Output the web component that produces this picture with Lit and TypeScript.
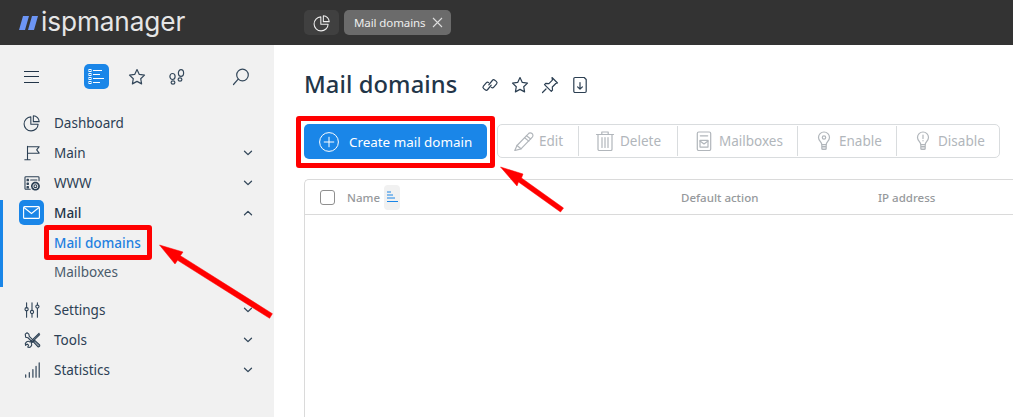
import { LitElement, html, css, svg } from "lit";
import { customElement } from "lit/decorators.js";

const ic = (body: unknown, size = 20, vb = 20) => html`<svg class="ic" width=${size} height=${size} viewBox="0 0 ${vb} ${vb}" fill="none" stroke="currentColor" stroke-width="1.2" stroke-linecap="round" stroke-linejoin="round">${body}</svg>`;

const pie = svg`<path d="M8.7 3.2a7.8 7.8 0 1 0 8.1 8.1H8.7z"/><path d="M11.5 2v6.5H18A6.5 6.5 0 0 0 11.5 2z"/>`;
const star = svg`<path d="M10 2.6l2.3 4.8 5.2.7-3.8 3.6.9 5.2L10 14.4l-4.6 2.5.9-5.2L2.5 8.1l5.2-.7z"/>`;
const chevD = html`<svg class="chev" width="10" height="6" viewBox="0 0 10 6" fill="none" stroke="currentColor" stroke-width="1.3" stroke-linecap="round" stroke-linejoin="round"><path d="M1.5 1.200L5 4.600l3.500-3.400"/></svg>`;
const chevU = html`<svg class="chev" width="10" height="6" viewBox="0 0 10 6" fill="none" stroke="currentColor" stroke-width="1.3" stroke-linecap="round" stroke-linejoin="round"><path d="M1.5 4.800L5 1.400l3.500 3.400"/></svg>`;

const icons = {
  dashboard: pie,
  main: svg`<path d="M5 2.500v15M2 17.500h6M5 3h13l-2.800 3.500 2.800 3.700H5"/>`,
  www: svg`<path d="M8 17H3.200a1 1 0 0 1-1-1V4a1 1 0 0 1 1-1h13.600a1 1 0 0 1 1 1v3.500"/><path d="M4.500 6h1.500v1.500H4.500zM4.500 10h1.500v1.500H4.500zM4.500 14h1.500v1.500H4.500zM8.500 6.700h7"/><circle cx="13.800" cy="13.500" r="1.600"/><circle cx="13.800" cy="13.500" r="4" stroke-dasharray="1.900 1" stroke-width="1.900"/>`,
  settings: svg`<path d="M4 2v5.500M4 11v7M10 2v8.500M10 14v4M16 2v2.500M16 8v10"/><circle cx="4" cy="9.200" r="1.800"/><circle cx="10" cy="12.200" r="1.800"/><circle cx="16" cy="6.200" r="1.800"/>`,
  tools: svg`<path d="M2.500 3.500L4.500 2l2 1.500.5 2.500 5 5-1.500 1.500-5-5-2.500-.5z"/><path d="M11.500 12l5 5.500a1.500 1.500 0 0 0 2-2L13 10.500z" fill="currentColor" fill-opacity=".5"/><path d="M18 2.500L7.800 12.300a3.200 3.200 0 0 0-5 3.700l2-1.500 1.400 1.200-1 2.200a3.200 3.200 0 0 0 4-4.600L18.500 4"/>`,
  stats: svg`<path d="M3 18v-2.500M7 18v-5M11 18v-8.500M14.500 18V6M18 18V2" stroke-width="1.300"/>`,
};

const tb = {
  edit: svg`<path d="M3 14.500L14.300 2.800a2.600 2.600 0 0 1 4 3.400L7 17.800.8 19.500z"/><path d="M3 14.500l4 3.300M12.500 4.700l4.200 3.300M10.600 6.800l4.200 3.300"/>`,
  del: svg`<path d="M1.500 3.500h17M6.800 3.300V1h6.400v2.300M3 3.800v14.400A1.300 1.300 0 0 0 4.300 19.500h11.400a1.300 1.300 0 0 0 1.300-1.300V3.800M7 6.500v10M10 6.500v10M13 6.500v10"/>`,
  box: svg`<rect x="3.300" y="1" width="13.400" height="18.500" rx="1.500"/><path d="M6.300 4.800h7.400"/><rect x="6" y="9.300" width="8" height="6.800"/><path d="M6 10l4 3 4-3"/>`,
  bulb: svg`<path d="M7.800 13.500c0-2.300-3.300-3.600-3.300-7a5.500 5.500 0 0 1 11 0c0 3.400-3.300 4.700-3.300 7z"/><path d="M7.800 13.500v4a1 1 0 0 0 1 1h2.400a1 1 0 0 0 1-1v-4M7.800 15.300h4.400M7.800 17h4.400"/><circle cx="10" cy="6.500" r="1.700"/>`,
  bulbOff: svg`<path d="M7.800 13.500c0-2.300-3.300-3.600-3.300-7a5.500 5.500 0 0 1 11 0c0 3.400-3.300 4.700-3.300 7z"/><path d="M7.800 13.500v4a1 1 0 0 0 1 1h2.400a1 1 0 0 0 1-1v-4M7.800 15.300h4.400M7.800 17h4.400M10 4v3.500M10 9.500v.3"/>`,
};

@customElement("app-root")
export class AppRoot extends LitElement {
  static styles = css`
    :host { display: block; width: 1013px; height: 417px; overflow: hidden; position: relative;
      font-family: "Noto Sans", "Liberation Sans", sans-serif; font-size: 14px; color: #223548; background: #fff; }
    * { box-sizing: border-box; }
    .ic { display: block; flex: none; }

    .top { height: 45px; background: #333; display: flex; align-items: center; }
    .brand { width: 304px; padding-left: 19px; display: flex; align-items: center; gap: 3px; }
    .logo-text { font-family: "Inter", "Roboto", sans-serif; font-size: 26.200px; font-weight: 400; color: #e6e6e6; letter-spacing: -0.1px; line-height: 45px; margin-top: -3px; }
    .tab { height: 25px; border-radius: 5px; display: flex; align-items: center; color: #eee; }
    .tab.home { width: 35px; background: #404040; justify-content: center; margin-right: 5px; }
    .tab.cur { width: 107px; background: #6b6b6b; padding-left: 10px; gap: 7px; font-size: 11.500px; letter-spacing: -0.1px; }

    .body { display: flex; height: 372px; }
    .side { width: 274px; background: #f1f1f1; flex: none; padding-top: 19px; }
    .quick { display: flex; align-items: center; height: 25px; padding-left: 24px; color: #34485b; margin-bottom: 19px; }
    .burger { width: 15px; height: 12px; border-top: 1px solid #223548; border-bottom: 1px solid #223548; position: relative; margin-right: 45px; }
    .burger::after { content: ""; position: absolute; left: 0; right: 0; top: 4.500px; border-top: 1px solid #223548; }
    .qbtn { width: 25px; height: 25px; border-radius: 5px; display: flex; align-items: center; justify-content: center; margin-right: 15px; }
    .qbtn.on { background: #1a86e8; color: #fff; }
    .qsearch { margin-left: 27px; }

    .item { height: 30px; display: flex; align-items: center; padding-left: 24px; padding-right: 21px; color: #2c4054; font-size: 13.500px; }
    .item .ic { margin-right: 13px; margin-left: -1px; }
    .item .lbl { flex: 1; }
    .chev { color: #34485b; display: block; }
    .group { border-left: 3px solid #1a86e8; height: 87px; margin-top: 2px; margin-bottom: 8px; }
    .group .item { padding-left: 21px; color: #223548; font-weight: 500; }
    .mailic { width: 25px; height: 25px; background: #1a86e8; color: #fff; border-radius: 5px; display: flex; align-items: center; justify-content: center; margin: 0 10px 0 -5px; }
    .sub { height: 28px; padding-left: 51px; display: flex; align-items: center; color: #4a5b6b; font-size: 13.500px; }
    .sub.cur { color: #1f80e0; font-weight: 500; height: 30px; }
    .group .first { height: 25px; margin-bottom: 3px; }

    .main { flex: 1; padding: 0 0 0 30px; min-width: 0; }
    .title { height: 79px; display: flex; align-items: center; color: #223548; }
    .title h1 { margin: 0 23px 0 0; font-size: 23.700px; font-weight: 500; line-height: 1; letter-spacing: .1px; }
    .title .ic { margin-right: 10px; color: #2c3f52; }
    .bar { display: flex; height: 35px; }
    .create { width: 183px; height: 35px; background: #1a86e8; color: #fff; border-radius: 5px; display: flex; align-items: center; padding-left: 15px; gap: 10px; font-size: 13.400px; font-weight: 400; }
    .tools { margin-left: 10px; width: 503px; height: 34px; border: 1px solid #d9dcde; border-radius: 5px; display: flex; align-items: center; color: #b1b6bb; font-size: 13.500px; }
    .tool { display: flex; align-items: center; height: 30px; gap: 5px; padding-left: 16px; flex: none; }
    .tool + .tool { border-left: 1px solid #d9dcde; }
    .tool.w80 { width: 80px; }
    .tool.w99 { width: 99px; }
    .tool.w120 { width: 120px; }
    .table { margin-top: 20px; height: 260px; border: 1px solid #dadada; border-right: 0; border-bottom: 0; border-top-left-radius: 5px; }
    .thead { height: 35px; border-bottom: 1px solid #dadada; display: flex; align-items: center; color: #96999c; font-size: 11.500px; font-weight: 500; position: relative; }
    .check { width: 15px; height: 15px; border: 1px solid #8f8f8f; border-radius: 3px; margin-left: 15px; margin-right: 12px; }
    .sort { width: 16px; height: 25px; background: #f1f1f1; border-radius: 4px; margin-left: 4px; display: flex; align-items: center; justify-content: center; color: #1a86e8; }
    .col-a { margin-left: 281px; width: 197px; }

    .anno { position: absolute; left: 0; top: 0; pointer-events: none; }
    .arrow { fill: #f00; stroke: #f00; stroke-width: .5; stroke-linejoin: round; }
    .redbox { position: absolute; border: 5px solid #f00; border-radius: 3px; pointer-events: none; }
    .rb1 { left: 44px; top: 225px; width: 108px; height: 35px; }
    .rb2 { left: 296px; top: 116px; width: 199px; height: 52px; }
  `;

  private row(icon: unknown, label: string) {
    return html`<div class="item">${ic(icon, 18)}<span class="lbl">${label}</span>${chevD}</div>`;
  }

  render() {
    return html`
      <div class="top">
        <div class="brand">
          <svg width="19" height="14" viewBox="0 0 19 14"><path fill="#6c95f5" d="M4 0h6L6 14H0zM13 0h6L15 14H9z"/></svg>
          <span class="logo-text">ispmanager</span>
        </div>
        <div class="tab home">${ic(pie, 18)}</div>
        <div class="tab cur"><span>Mail domains</span>
          <svg width="11" height="11" viewBox="0 0 11 11" stroke="#ddd" stroke-width="1.100"><path d="M1 1l9 9M10 1l-9 9"/></svg>
        </div>
      </div>
      <div class="body">
        <aside class="side">
          <div class="quick">
            <div class="burger"></div>
            <div class="qbtn on">
              <svg width="17" height="17" viewBox="0 0 17 17" fill="none" stroke="#fff" stroke-width="1"><rect x="1" y="1.500" width="2" height="2"/><rect x="1" y="5.500" width="2" height="2"/><rect x="1" y="9.500" width="2" height="2"/><rect x="1" y="13.500" width="2" height="2"/><path d="M5 2.500h9M5 6.500h7M5 10.500h11M5 14.500h7"/></svg>
            </div>
            <div class="qbtn">${ic(star)}</div>
            <div class="qbtn">
              ${ic(svg`<ellipse cx="5.500" cy="9.500" rx="2.600" ry="3"/><ellipse cx="6" cy="15.500" rx="1.900" ry="1.600"/><ellipse cx="14" cy="6" rx="2.600" ry="3.400"/><ellipse cx="13" cy="12.500" rx="1.900" ry="1.600"/>`)}
            </div>
            <div class="qsearch">${ic(svg`<circle cx="11.500" cy="8" r="5.800"/><path d="M7.200 12.200L2.500 17.500"/>`)}</div>
          </div>
          <div class="item">${ic(icons.dashboard, 18)}<span class="lbl">Dashboard</span></div>
          ${this.row(icons.main, "Main")}
          ${this.row(icons.www, "WWW")}
          <div class="group">
            <div class="item first">
              <span class="mailic"><svg width="17" height="13" viewBox="0 0 17 13" fill="none" stroke="#fff" stroke-width="1.100"><rect x=".6" y=".6" width="15.800" height="11.800" rx="1"/><path d="M1 1.500l7.500 6 7.500-6"/></svg></span>
              <span class="lbl">Mail</span>${chevU}
            </div>
            <div class="sub cur">Mail domains</div>
            <div class="sub">Mailboxes</div>
          </div>
          ${this.row(icons.settings, "Settings")}
          ${this.row(icons.tools, "Tools")}
          ${this.row(icons.stats, "Statistics")}
        </aside>
        <main class="main">
          <div class="title">
            <h1>Mail domains</h1>
            ${ic(svg`<path d="M8.800 9.800l3.500-4.300a1.800 1.800 0 0 1 2.500-.3l1.500 1.200a1.800 1.800 0 0 1 .3 2.500l-2.800 3.300a1.800 1.800 0 0 1-2.500.2"/><path d="M11.200 10.200l-3.500 4.300a1.800 1.800 0 0 1-2.500.3l-1.500-1.200a1.800 1.800 0 0 1-.3-2.500l2.800-3.300a1.800 1.800 0 0 1 2.500-.2"/>`)}
            ${ic(star)}
            ${ic(svg`<path d="M12 2.500l5.500 5.500-1.700.5-3.500 3.500.2 3.200-1.200 1.200-6.800-6.800 1.200-1.200 3.200.2 3.500-3.500zM6 14L2.500 17.500"/>`)}
            ${ic(svg`<path d="M11.500 2.500H5a1.200 1.200 0 0 0-1.200 1.200v12.600A1.200 1.200 0 0 0 5 17.500h10a1.200 1.200 0 0 0 1.200-1.200V4.500l-2-2h-2.700"/><path d="M10 7.500v6.500M7.600 11.800l2.400 2.400 2.400-2.400"/>`)}
          </div>
          <div class="bar">
            <div class="create">
              <svg width="20" height="20" viewBox="0 0 20 20" fill="none" stroke="#fff" stroke-width="1"><circle cx="10" cy="10" r="9.400"/><path d="M10 4.800v10.400M4.800 10h10.400"/></svg>
              <span>Create mail domain</span>
            </div>
            <div class="tools">
              <div class="tool w80">${ic(tb.edit)}<span>Edit</span></div>
              <div class="tool w99">${ic(tb.del)}<span>Delete</span></div>
              <div class="tool w120">${ic(tb.box)}<span>Mailboxes</span></div>
              <div class="tool w99">${ic(tb.bulb)}<span>Enable</span></div>
              <div class="tool">${ic(tb.bulbOff)}<span>Disable</span></div>
            </div>
          </div>
          <div class="table">
            <div class="thead">
              <div class="check"></div>
              <span>Name</span>
              <div class="sort"><svg width="11" height="12" viewBox="0 0 11 12" stroke="currentColor" stroke-width="1"><path d="M0 1h4M0 4h6M0 7h8M0 10.500h11"/></svg></div>
              <span class="col-a">Default action</span>
              <span>IP address</span>
            </div>
          </div>
        </main>
      </div>
      <div class="redbox rb1"></div>
      <div class="redbox rb2"></div>
      <svg class="anno" width="1013" height="417" viewBox="0 0 1013 417">
        <path class="arrow" d="M159.500 245L183 252L180.400 255.700L272.400 313.700L269.600 318.300L177.600 260.300L175 264z"/>
        <path class="arrow" d="M500.500 167L523 174L521.500 178L563.500 208L560.500 212L518.500 182L517 186z"/>
      </svg>
    `;
  }
}
